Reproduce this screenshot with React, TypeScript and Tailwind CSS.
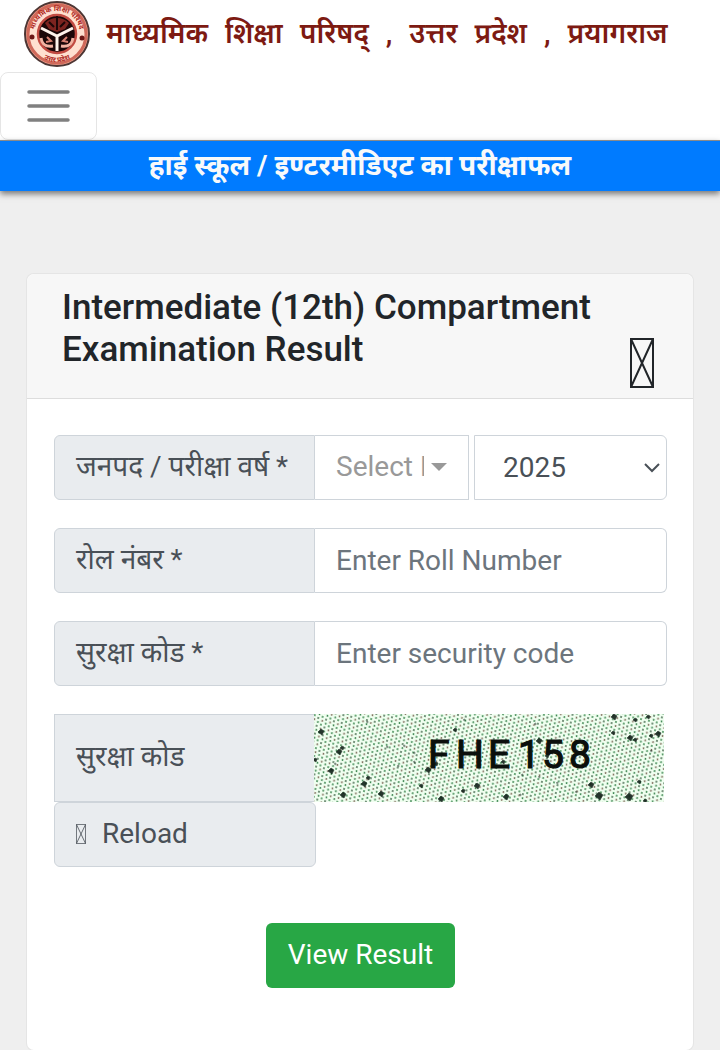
import type { ReactNode } from 'react';

const SPECKS = [
  [7, 18, 3], [25, 38, 3], [28, 34, 2], [17, 57, 3], [21, 50, 1], [29, 81, 3], [50, 70, 3], [54, 64, 2],
  [67, 80, 3], [1, 46, 2], [90, 32, 1], [73, 33, 1], [100, 39, 1], [84, 52, 1], [100, 48, 1], [107, 72, 2],
  [127, 85, 3], [149, 77, 2], [163, 72, 3], [141, 16, 2], [53, 8, 1], [114, 56, 3], [150, 6, 1], [192, 83, 3],
  [225, 27, 3], [300, 3, 3], [321, 6, 2], [334, 3, 2], [299, 19, 2], [316, 24, 3], [321, 26, 2], [337, 22, 2],
  [344, 20, 3], [277, 71, 3], [285, 82, 4], [315, 83, 4], [325, 68, 2], [243, 69, 1], [208, 61, 1], [225, 63, 1],
  [206, 81, 1], [331, 87, 2], [337, 37, 1], [221, 10, 1], [262, 78, 1], [233, 42, 2], [122, 50, 2], [189, 48, 2],
];

interface FieldProps {
  id: string;
  label: string;
  children: ReactNode;
}

function Field({ id, label, children }: FieldProps) {
  return (
    <div className="flex">
      <label
        htmlFor={id}
        className="flex h-[65px] w-[261px] shrink-0 items-center rounded-l-md border border-[#ced4da] bg-[#e9ecef] px-[21px] pb-0.5 whitespace-nowrap"
      >
        {label}
      </label>
      {children}
    </div>
  );
}

function TofuBox({ className, line }: { className: string; line: number }) {
  return (
    <svg className={className} viewBox="0 0 24 50" fill="none" stroke="currentColor" strokeWidth={line} preserveAspectRatio="none" aria-hidden="true">
      <path d="M1 1h22v48H1zM1 1l22 48M23 1L1 49" />
    </svg>
  );
}

function Emblem() {
  return (
    <svg className="size-[66px] shrink-0" viewBox="0 0 66 66" fill="none">
      <defs>
        <path id="arc-top" d="M10 33a23 23 0 0 1 46 0" />
        <path id="arc-bottom" d="M5 33a28 28 0 0 0 56 0" />
      </defs>
      <circle cx="33" cy="33" r="32" fill="#f0a08c" stroke="#4d3634" strokeWidth="2" />
      <circle cx="33" cy="33" r="29" fill="#ffe0d0" stroke="#d0695a" strokeWidth="3" />
      <circle cx="33" cy="33" r="19" fill="#1c0708" stroke="#c24b42" strokeWidth="2.5" />
      <path d="M21 22q5-5 12-5t12 5l-4 6-8 3-8-3z" fill="#7c2420" />
      <path d="M33 15v14M25 21l5 5M41 21l-5 5" stroke="#1c0708" strokeWidth="2" />
      <path d="M17 27l16 8 16-8M33 35v15" stroke="#fff3ec" strokeWidth="3" />
      <path d="M17 37c1 7 5 9 12 8M49 37c-1 7-5 9-12 8" stroke="#f3b3a2" strokeWidth="3" />
      <path d="M23 36l4 4-5 1M43 36l-4 4 5 1" stroke="#d98273" strokeWidth="2" />
      <circle cx="8" cy="36" r="2.5" fill="#6d1715" />
      <circle cx="58" cy="37" r="2.5" fill="#6d1715" />
      <g fill="#b02a24" fontSize="7" fontWeight="700" textAnchor="middle">
        <text>
          <textPath href="#arc-top" startOffset="50%">माध्यमिक शिक्षा परिषद</textPath>
        </text>
        <text>
          <textPath href="#arc-bottom" startOffset="50%">उत्तर प्रदेश</textPath>
        </text>
      </g>
    </svg>
  );
}

function Captcha() {
  return (
    <svg className="h-[88px] w-[350px] min-w-0" viewBox="0 0 350 88" role="img" aria-label="FHE158">
      <defs>
        <pattern id="dots" width="8" height="8" patternUnits="userSpaceOnUse" patternTransform="rotate(12)">
          <rect width="8" height="8" fill="#f0fff0" />
          <circle cx="1" cy="1" r="0.9" fill="#2f7d45" />
          <circle cx="5" cy="3" r="0.9" fill="#3c5f44" />
          <circle cx="1.5" cy="5" r="0.9" fill="#7a6354" />
          <circle cx="5.5" cy="7" r="0.9" fill="#2f7d45" />
        </pattern>
      </defs>
      <rect width="350" height="88" fill="url(#dots)" />
      {SPECKS.map(([x, y, r], i) => (
        <path
          key={i}
          d={`M${x - r} ${y}l${r} ${-r} ${r} ${r - 1} ${-r + 1} ${r + 1}z`}
          fill="#102018"
          stroke="#102018"
          strokeWidth="0.6"
          strokeLinejoin="round"
          opacity={r === 1 ? 0.5 : 0.9}
        />
      ))}
      <g fill="#0b0f0c" stroke="#0b0f0c" strokeWidth="1.2" fontFamily="Roboto, sans-serif" fontSize="39">
        <text x="114" y="54">F</text>
        <text x="142" y="54">H</text>
        <text x="174" y="54">E</text>
        <text x="204" y="54">1</text>
        <text x="228" y="54">5</text>
        <text x="255" y="54">8</text>
      </g>
    </svg>
  );
}

export default function App() {
  return (
    <div className="min-h-screen bg-[#efefef] font-[Roboto,'Noto_Sans_Devanagari','Noto_Sans',sans-serif] text-[28px] leading-[42px] text-[#495057]">
      <header className="bg-white">
        <a href="#" className="flex h-[72px] items-center gap-4 pb-1 pl-6 font-semibold whitespace-nowrap text-[#7d1a12]">
          <Emblem />
          <span className="flex gap-[17px]">
            <span>माध्यमिक</span>
            <span>शिक्षा</span>
            <span>परिषद्</span>
            <span>,</span>
            <span>उत्तर</span>
            <span>प्रदेश</span>
            <span>,</span>
            <span>प्रयागराज</span>
          </span>
        </a>
        <button type="button" aria-label="Menu" className="flex h-[68px] w-[97px] items-center justify-center rounded-lg border border-black/10">
          <svg className="h-9 w-11" viewBox="0 0 44 36" stroke="#808080" strokeWidth="3.5" strokeLinecap="round">
            <path d="M2 4h39M2 18h39M2 32h39" />
          </svg>
        </button>
      </header>

      <h1 className="relative flex h-[51px] items-center justify-center border-t border-[#8a8a8a] bg-[#007bff] font-bold text-[#f8f9fa] shadow-[0_3px_6px_rgba(0,0,0,0.5)]">
        हाई स्कूल / इण्टरमीडिएट का परीक्षाफल
      </h1>

      <main className="px-[26px] pt-[82px]">
        <form className="rounded-lg border border-black/10 bg-white" onSubmit={(e) => e.preventDefault()}>
          <div className="flex h-[125px] justify-between rounded-t-lg border-b border-black/10 bg-[#f7f7f7] pt-[13px] pr-[39px] pl-[35px] text-[#212529]">
            <h2 className="max-w-[540px] text-[35px] font-medium">
              Intermediate (12th) Compartment Examination Result
            </h2>
            <TofuBox className="mt-[51px] h-[50px] w-6 shrink-0" line={2} />
          </div>

          <div className="pt-9 pr-[26px] pb-[62px] pl-[27px]">
            <div className="flex flex-col gap-7">
              <Field id="district" label="जनपद / परीक्षा वर्ष *">
                <div className="relative w-[154px] shrink-0">
                  <select
                    id="district"
                    className="h-[65px] w-full appearance-none border border-l-0 border-[#ced4da] bg-white pr-[44px] pb-0.5 pl-[21px] text-[#999999]"
                  >
                    <option>Select District</option>
                  </select>
                  <span className="pointer-events-none absolute top-7 right-[22px] border-x-8 border-t-8 border-x-transparent border-t-[#999999]" />
                </div>
                <div className="relative ml-[5px] min-w-0 grow">
                  <select
                    aria-label="Year"
                    defaultValue="2025"
                    className="h-[65px] w-full appearance-none rounded-r-md border border-[#ced4da] bg-white px-7"
                  >
                    <option>2025</option>
                  </select>
                  <svg className="pointer-events-none absolute top-7 right-[7px] h-3 w-4" viewBox="0 0 16 12" fill="none" stroke="currentColor" strokeWidth="2">
                    <path d="M1 1l7 7 7-7" />
                  </svg>
                </div>
              </Field>

              <Field id="roll" label="रोल नंबर *">
                <input
                  id="roll"
                  placeholder="Enter Roll Number"
                  className="h-[65px] min-w-0 grow rounded-r-md border border-l-0 border-[#ced4da] px-[21px] placeholder:text-[#6c757d]"
                />
              </Field>

              <Field id="code" label="सुरक्षा कोड *">
                <input
                  id="code"
                  placeholder="Enter security code"
                  className="h-[65px] min-w-0 grow rounded-r-md border border-l-0 border-[#ced4da] px-[21px] placeholder:text-[#6c757d]"
                />
              </Field>

              <div>
                <div className="flex">
                  <span className="flex h-[88px] w-[260px] shrink-0 items-center border border-r-0 border-[#ced4da] bg-[#e9ecef] px-[21px] pb-0.5">
                    सुरक्षा कोड
                  </span>
                  <Captcha />
                </div>
                <button
                  type="button"
                  className="flex h-[65px] w-[262px] items-center gap-4 rounded-md border border-[#ced4da] bg-[#e9ecef] px-[21px] pb-0.5"
                >
                  <TofuBox className="h-5 w-2.5" line={2} />
                  Reload
                </button>
              </div>
            </div>

            <button type="submit" className="mx-auto mt-14 block h-[65px] rounded-md bg-[#28a745] px-[22px] pb-0.5 text-white">
              View Result
            </button>
          </div>
        </form>
      </main>
    </div>
  );
}
